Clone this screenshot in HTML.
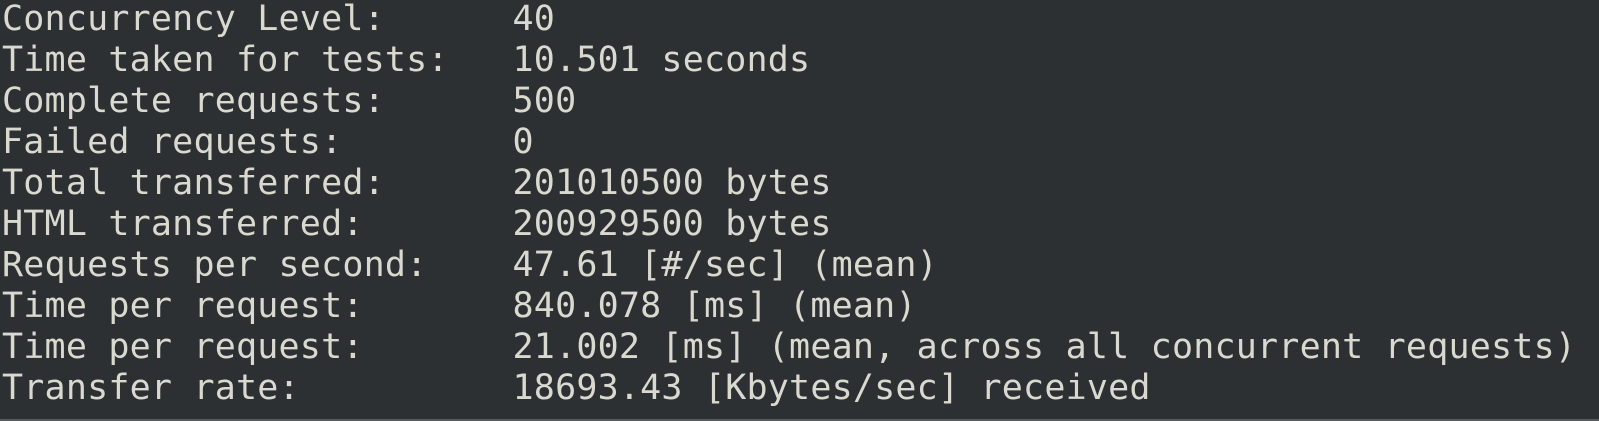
<!DOCTYPE html>
<html><head><style>
html,body{margin:0;padding:0;background:#2c3033;width:1599px;height:421px;overflow:hidden;position:relative}
.t{position:absolute;left:2px;top:-1px;font-family:"DejaVu Sans Mono","Liberation Mono",monospace;font-size:35px;color:#d9d9d0;letter-spacing:0.2px;white-space:pre}
.t div{height:41px;line-height:41px}
.b{position:absolute;left:0;right:0;bottom:0;height:2px;background:#55595b}
</style></head><body>
<div class="t"><div>Concurrency Level:      40</div><div>Time taken for tests:   10.501 seconds</div><div>Complete requests:      500</div><div>Failed requests:        0</div><div>Total transferred:      201010500 bytes</div><div>HTML transferred:       200929500 bytes</div><div>Requests per second:    47.61 [#/sec] (mean)</div><div>Time per request:       840.078 [ms] (mean)</div><div>Time per request:       21.002 [ms] (mean, across all concurrent requests)</div><div>Transfer rate:          18693.43 [Kbytes/sec] received</div></div>
<div class="b"></div>
</body></html>
